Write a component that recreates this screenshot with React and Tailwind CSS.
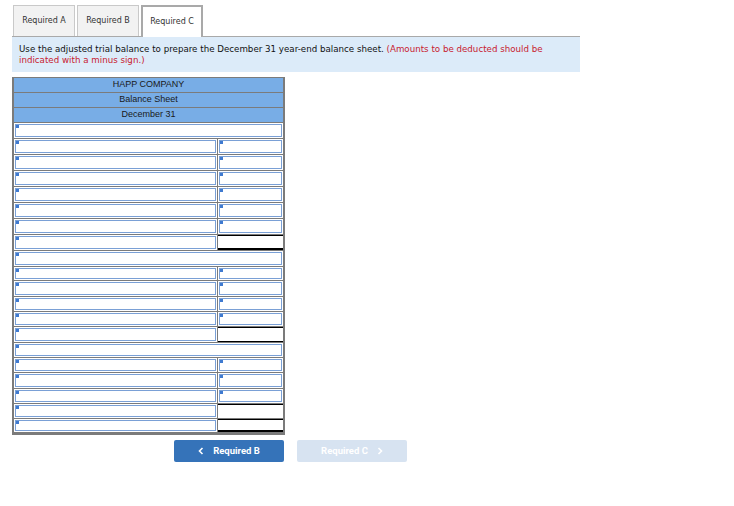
import React from "react";

// h = row height in px, as measured on the worksheet
const rows = [
  { type: "full", h: 16 },
  { type: "split", h: 16 }, { type: "split", h: 16 }, { type: "split", h: 16 },
  { type: "split", h: 16 }, { type: "split", h: 16 }, { type: "split", h: 16 },
  { type: "total", h: 16 },
  { type: "full", h: 16 },
  { type: "split", h: 14 }, { type: "split", h: 16 }, { type: "split", h: 15 }, { type: "split", h: 15 },
  { type: "subtotal", h: 16 },
  { type: "full", h: 15 },
  { type: "split", h: 15 }, { type: "split", h: 16 }, { type: "split", h: 15 },
  { type: "subtotal", h: 15, open: true },
  { type: "total", h: 14 },
];

function Marker() {
  return <span className="absolute left-0 top-0 w-[3px] h-[3px] bg-[#3f7ad0]" />;
}

function InputCell({ marker = true }) {
  return (
    <div className="relative h-full border border-[#7aa0d6] bg-white">
      {marker && <Marker />}
    </div>
  );
}

function Row({ row }) {
  if (row.type === "full") {
    return (
      <div className="border-b border-[#7b7b7b] p-[1px]" style={{ height: row.h }}>
        <InputCell />
      </div>
    );
  }
  const right =
    row.type === "split" ? (
      <div className="w-[66px] p-[1px]">
        <InputCell />
      </div>
    ) : (
      <div
        className={
          "w-[66px] bg-white border-t border-black " +
          (row.type === "total" ? "border-b-2" : row.open ? "" : "border-b")
        }
      />
    );
  return (
    <div className="flex border-b border-[#7b7b7b]" style={{ height: row.h }}>
      <div className="w-[206px] p-[1px] border-r border-[#7b7b7b]">
        <InputCell />
      </div>
      {right}
    </div>
  );
}

export default function App() {
  return (
    <div className="w-[734px] h-[506px] bg-white relative" style={{ fontFamily: '"DejaVu Sans", Verdana, sans-serif' }}>
      {/* tabs */}
      <div className="flex items-end gap-[2px] pl-[13px] pt-[5px] h-[36px]">
        <div className="h-[31px] w-[62px] flex items-center justify-center bg-[#f2f2f2] border border-b-0 border-[#c9c9c9] text-[8px] text-[#333]">
          Required A
        </div>
        <div className="h-[31px] w-[62px] flex items-center justify-center bg-[#f2f2f2] border border-b-0 border-[#c9c9c9] text-[8px] text-[#333]">
          Required B
        </div>
        <div className="h-[32px] w-[62px] flex items-center justify-center bg-white border-2 border-b-0 border-[#a9a9a9] text-[8px] text-[#333] -mb-[1px] relative z-10">
          Required C
        </div>
      </div>

      {/* instructions */}
      <div className="ml-[12px] w-[568px] h-[36px] bg-[#dcebf9] border-t border-[#a9a9a9] pl-[7px] pr-[30px] pt-[7px] text-[8.7px] leading-[10.5px] text-[#111]">
        Use the adjusted trial balance to prepare the December 31 year-end balance sheet.{" "}
        <span className="text-[#c8202f]">(Amounts to be deducted should be indicated with a minus sign.)</span>
      </div>

      {/* balance sheet */}
      <div className="ml-[12px] mt-[5px] w-[273px] border-2 border-t border-b-2 border-[#7b7b7b]" style={{ fontFamily: '"Liberation Sans", Arial, sans-serif' }}>
        {["HAPP COMPANY", "Balance Sheet", "December 31"].map((t) => (
          <div key={t} className="h-[15px] flex items-center justify-center bg-[#78ade6] border-b border-[#7b7b7b] text-[9px] text-[#1a1a1a]">
            {t}
          </div>
        ))}
        {rows.map((r, i) => (
          <Row key={i} row={r} />
        ))}
      </div>

      {/* nav buttons */}
      <div className="flex gap-[13px] ml-[174px] mt-[5px]" style={{ fontFamily: 'Roboto, "Liberation Sans", sans-serif' }}>
        <div className="w-[110px] h-[22px] rounded-[2px] bg-[#3573b9] flex items-center justify-center gap-[9px] text-white text-[9.5px] font-bold">
          <svg width="6" height="8" viewBox="0 0 6 8" fill="none" stroke="white" strokeWidth="1.6">
            <path d="M4.5 1 L1.5 4 L4.5 7" />
          </svg>
          Required B
        </div>
        <div className="w-[110px] h-[22px] rounded-[2px] bg-[#d7e3f1] flex items-center justify-center gap-[9px] text-white text-[9.5px] font-bold">
          Required C
          <svg width="6" height="8" viewBox="0 0 6 8" fill="none" stroke="white" strokeWidth="1.6">
            <path d="M1.5 1 L4.5 4 L1.5 7" />
          </svg>
        </div>
      </div>
    </div>
  );
}
